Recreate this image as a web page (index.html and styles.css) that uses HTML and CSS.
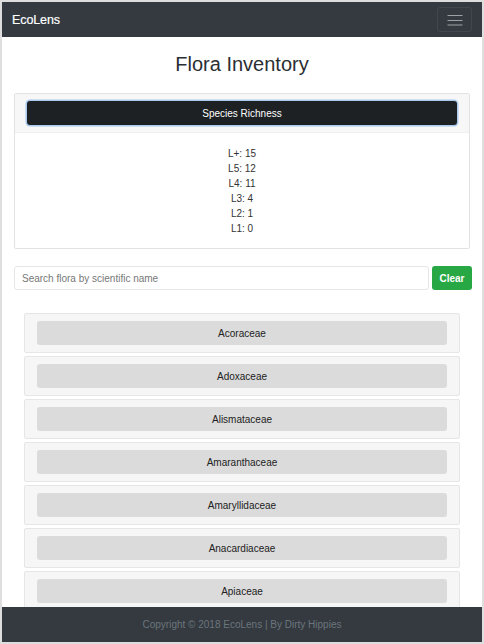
FILE: index.html
```html
<!DOCTYPE html>
<html lang="en">
<head>
<meta charset="utf-8">
<title>EcoLens - Flora Inventory</title>
<link rel="stylesheet" href="styles.css">
</head>
<body>
<div class="window">
  <nav class="navbar">
    <span class="brand">EcoLens</span>
    <button class="toggler" aria-label="Toggle navigation">
      <svg width="16" height="12" viewBox="0 0 16 12">
        <path d="M0.5 1.5H15.5M0.5 6.5H15.5M0.5 11H15.5" stroke="#9ea1a4" stroke-width="1.2" fill="none"/>
      </svg>
    </button>
  </nav>
  <main class="main">
    <h2 class="title">Flora Inventory</h2>
    <section class="card">
      <div class="card-header">
        <button class="btn-dark">Species Richness</button>
      </div>
      <div class="card-body">
        <div>L+: 15</div>
        <div>L5: 12</div>
        <div>L4: 11</div>
        <div>L3: 4</div>
        <div>L2: 1</div>
        <div>L1: 0</div>
      </div>
    </section>
    <div class="search">
      <input class="search-input" type="text" placeholder="Search flora by scientific name">
      <button class="btn-clear">Clear</button>
    </div>
    <ul class="families">
      <li class="family"><button class="family-btn">Acoraceae</button></li>
      <li class="family"><button class="family-btn">Adoxaceae</button></li>
      <li class="family"><button class="family-btn">Alismataceae</button></li>
      <li class="family"><button class="family-btn">Amaranthaceae</button></li>
      <li class="family"><button class="family-btn">Amaryllidaceae</button></li>
      <li class="family"><button class="family-btn">Anacardiaceae</button></li>
      <li class="family"><button class="family-btn">Apiaceae</button></li>
      <li class="family"><button class="family-btn">Apocynaceae</button></li>
    </ul>
  </main>
  <footer class="footer">Copyright © 2018 EcoLens | By Dirty Hippies</footer>
</div>
</body>
</html>
```

FILE: styles.css
```css
* { box-sizing: border-box; }
html, body { margin: 0; padding: 0; background: #fff; }
body {
  font-family: "Liberation Sans", Arial, sans-serif;
  font-size: 10px;
  color: #212529;
}
.window {
  position: relative;
  width: 484px;
  height: 644px;
  border: 2px solid #dedede;
  overflow: hidden;
  background: #fff;
}
.navbar {
  height: 35px;
  background: #343a40;
  display: flex;
  align-items: center;
  justify-content: space-between;
  padding: 0 10px;
}
.brand {
  color: #fff;
  font-size: 12.5px;
  letter-spacing: -0.1px;
  -webkit-text-stroke: 0.2px #fff;
}
.toggler {
  width: 35px;
  height: 25px;
  padding: 0;
  background: transparent;
  border: 1px solid rgba(255,255,255,0.07);
  border-radius: 3px;
  display: flex;
  align-items: center;
  justify-content: center;
}
.main {
  padding: 15px 12px 0;
}
.title {
  margin: 0;
  text-align: center;
  font-size: 20px;
  font-weight: 400;
  line-height: 24px;
  color: #2b2f33;
}
.card {
  margin-top: 17px;
  border: 1px solid #e2e2e2;
  border-radius: 2px;
}
.card-header {
  background: #f7f7f7;
  border-bottom: 1px solid #efefef;
  padding: 7px 12px;
}
.btn-dark {
  display: block;
  width: 100%;
  height: 24px;
  border: none;
  border-radius: 3px;
  background: #1d2124;
  color: #fff;
  font-family: inherit;
  font-size: 10px;
  box-shadow: 0 0 0 1.5px #a9c9ee;
}
.card-body {
  padding: 13px 12px 12px;
  text-align: center;
  line-height: 15px;
  color: #333;
}
.search {
  margin-top: 17px;
  display: flex;
  gap: 3px;
  margin-right: -2px;
}
.search-input {
  flex: 1;
  height: 24px;
  border: 1px solid #e6e6e6;
  border-radius: 3px;
  padding: 0 7px;
  font-family: inherit;
  font-size: 10px;
  color: #495057;
}
.search-input::placeholder { color: #777; }
.btn-clear {
  width: 40px;
  height: 24px;
  border: none;
  border-radius: 3px;
  background: #28a745;
  color: #fff;
  font-family: inherit;
  font-size: 10px;
  font-weight: 700;
  padding: 0;
}
.families {
  list-style: none;
  margin: 23px 10px 0 10px;
  padding: 0;
  display: flex;
  flex-direction: column;
  gap: 3px;
}
.family {
  height: 40px;
  background: #f6f6f6;
  border: 1px solid #e6e6e6;
  border-radius: 2px;
  padding: 7px 12px;
}
.family-btn {
  display: block;
  width: 100%;
  height: 24px;
  border: none;
  border-radius: 3px;
  background: #dbdbdb;
  color: #222;
  font-family: inherit;
  font-size: 10px;
}
.footer {
  position: absolute;
  left: 0;
  right: 0;
  bottom: 0;
  height: 35px;
  background: #343a40;
  color: #6c757d;
  display: flex;
  align-items: center;
  justify-content: center;
  font-size: 10px;
}
```
